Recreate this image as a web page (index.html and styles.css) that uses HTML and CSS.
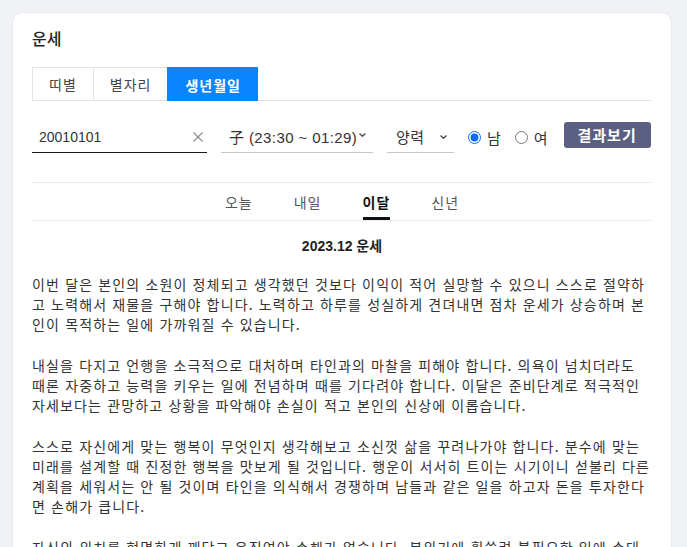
FILE: index.html
```html
<!DOCTYPE html>
<html lang="ko">
<head>
    <meta charset="UTF-8">
    <meta name="viewport" content="width=device-width, initial-scale=1.0">
    <title>운세</title>
    <link rel="stylesheet" href="styles.css">
</head>
<body>

    <div class="card">
        <h2 class="title">운세</h2>

        <div class="tabs">
            <button>띠별</button>
            <button>별자리</button>
            <button class="active">생년월일</button>
        </div>

        <div class="query">
            <div class="field date">
                <input type="text" value="20010101">
                <svg class="clear" width="10" height="10" viewBox="0 0 10 10">
                    <path d="M0.5 0.5 L9.5 9.5 M9.5 0.5 L0.5 9.5" stroke="#8a8a8a" stroke-width="1.1" fill="none"/>
                </svg>
            </div>
            <div class="field select time">
                <span>子 (23:30 ~ 01:29)</span>
                <svg class="chevron" width="7" height="4" viewBox="0 0 7 4">
                    <path d="M0.5 0.5 L3.5 3.3 L6.5 0.5" stroke="#444" stroke-width="1.2" fill="none"/>
                </svg>
            </div>
            <div class="field select calendar">
                <span>양력</span>
                <svg class="chevron" width="7" height="4" viewBox="0 0 7 4">
                    <path d="M0.5 0.5 L3.5 3.3 L6.5 0.5" stroke="#444" stroke-width="1.2" fill="none"/>
                </svg>
            </div>
            <label class="radio"><input type="radio" name="gender" checked>남</label>
            <label class="radio"><input type="radio" name="gender">여</label>
            <button class="submit">결과보기</button>
        </div>

        <div class="periods">
            <a>오늘</a>
            <a>내일</a>
            <a class="active">이달</a>
            <a>신년</a>
        </div>

        <h3 class="result-title">2023.12 운세</h3>

        <div class="result-text">
            <p>이번 달은 본인의 소원이 정체되고 생각했던 것보다 이익이 적어 실망할 수 있으니 스스로 절약하고 노력해서 재물을 구해야 합니다. 노력하고 하루를 성실하게 견뎌내면 점차 운세가 상승하며 본인이 목적하는 일에 가까워질 수 있습니다.</p>
            <p>내실을 다지고 언행을 소극적으로 대처하며 타인과의 마찰을 피해야 합니다. 의욕이 넘치더라도 때론 자중하고 능력을 키우는 일에 전념하며 때를 기다려야 합니다. 이달은 준비단계로 적극적인 자세보다는 관망하고 상황을 파악해야 손실이 적고 본인의 신상에 이롭습니다.</p>
            <p>스스로 자신에게 맞는 행복이 무엇인지 생각해보고 소신껏 삶을 꾸려나가야 합니다. 분수에 맞는 미래를 설계할 때 진정한 행복을 맛보게 될 것입니다. 행운이 서서히 트이는 시기이니 섣불리 다른 계획을 세워서는 안 될 것이며 타인을 의식해서 경쟁하며 남들과 같은 일을 하고자 돈을 투자한다면 손해가 큽니다.</p>
            <p>자신의 위치를 현명하게 깨닫고 움직여야 손해가 없습니다. 분위기에 휩쓸려 불필요한 일에 손대면 오히려 손실이 커질 수 있으니 신중하게 판단하는 것이 좋습니다.</p>
        </div>
    </div>

</body>
</html>
```

FILE: styles.css
```css
body {
    font-family: 'Liberation Sans', 'Noto Sans CJK KR', sans-serif;
    background-color: #f1f2f6;
    color: #333;
    margin: 0;
    padding: 12px 15px 12px 12px;
}
.card {
    background-color: #ffffff;
    border: 1px solid #e8e9ee;
    border-radius: 10px;
    padding: 17px 19px 30px;
}
.title {
    font-size: 16px;
    font-weight: 500;
    line-height: 20px;
    color: #222;
    margin: 0 0 17px;
}
.tabs {
    display: flex;
    border-bottom: 1px solid #e3e3e3;
}
.tabs button {
    font-family: inherit;
    font-size: 14px;
    letter-spacing: 1px;
    color: #444;
    background-color: #fff;
    border: 1px solid #e3e3e3;
    border-bottom: none;
    border-right: none;
    height: 33px;
    padding: 0 16px;
    margin: 0;
    cursor: pointer;
}
.tabs button:last-child {
    border-right: 1px solid #e3e3e3;
}
.tabs button.active {
    background-color: #0a85ff;
    border-color: #0a85ff;
    color: #fff;
    font-weight: 700;
    padding: 0 16px 0 17px;
    margin-bottom: -1px;
    height: 34px;
}
.query {
    display: flex;
    align-items: center;
    gap: 14px;
    margin-top: 20px;
}
.field {
    display: flex;
    align-items: center;
    height: 31px;
    border-bottom: 1px solid #c6c6c6;
    font-size: 15px;
    color: #333;
}
.field.date {
    width: 175px;
    border-bottom-color: #1a1a1a;
}
.field.date input {
    flex: 1;
    min-width: 0;
    border: none;
    outline: none;
    font-family: inherit;
    font-size: 14px;
    color: #333;
    padding: 0 0 0 7px;
    background: none;
}
.clear {
    margin-right: 4px;
}
.field.select {
    justify-content: space-between;
    box-sizing: border-box;
}
.field.time {
    width: 152px;
    padding: 0 7px 0 8px;
    letter-spacing: 0.4px;
}
.field.time .chevron {
    margin-top: -3px;
}
.field.calendar {
    width: 67px;
    padding: 0 7px 0 9px;
    letter-spacing: 0.5px;
}
.radio {
    display: flex;
    align-items: center;
    gap: 6px;
    font-size: 15px;
    color: #333;
}
.radio input {
    margin: 0;
    width: 13px;
    height: 13px;
    accent-color: #0b6cf2;
}
.submit {
    font-family: inherit;
    font-size: 15px;
    font-weight: 700;
    letter-spacing: 1px;
    color: #fff;
    background-color: #5b5f81;
    border: none;
    border-radius: 3px;
    width: 87px;
    height: 26px;
    padding: 0;
    margin: 0 0 5px 2px;
    cursor: pointer;
}
.periods {
    display: flex;
    justify-content: center;
    gap: 41px;
    margin-top: 29px;
    border-top: 1px solid #eeeeee;
    border-bottom: 1px solid #eeeeee;
}
.periods a {
    font-size: 14px;
    line-height: 20px;
    letter-spacing: 1px;
    color: #555;
    padding: 10px 0 4px;
    border-bottom: 3px solid transparent;
    cursor: pointer;
}
.periods a.active {
    color: #111;
    font-weight: 700;
    border-bottom-color: #111;
}
.result-title {
    text-align: center;
    font-size: 14px;
    font-weight: 700;
    line-height: 20px;
    color: #222;
    margin: 15px 0 18px;
}
.result-text p {
    font-family: 'Noto Sans CJK KR', 'Liberation Sans', sans-serif;
    font-size: 14px;
    line-height: 20px;
    letter-spacing: 1.15px;
    word-break: break-all;
    color: #333;
    margin: 0 0 21px;
}
```
